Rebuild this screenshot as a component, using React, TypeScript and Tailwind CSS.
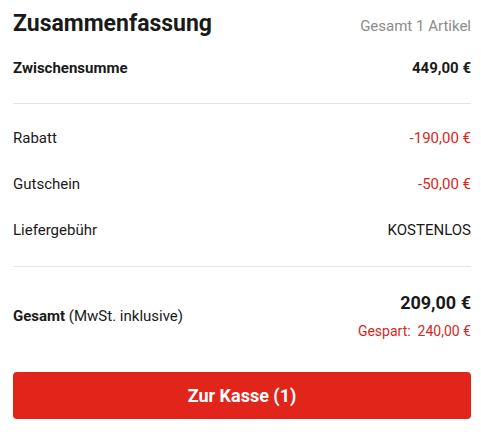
export default function App() {
  return (
    <div className="w-[481px] h-[437px] bg-white pl-[13px] pr-[10px] font-['Roboto',sans-serif] text-[#1a1a1a]">
      {/* Header */}
      <div className="flex items-baseline justify-between pt-[9px]">
        <h2 className="text-[23px] leading-[29px] font-bold">Zusammenfassung</h2>
        <span className="text-[15px] text-[#8c8c8c]">Gesamt 1 Artikel</span>
      </div>

      <div className="mt-[8px] flex h-[44px] items-center justify-between text-[15px] font-bold">
        <span>Zwischensumme</span>
        <span>449,00 €</span>
      </div>

      <div className="mt-[13px] h-px bg-[#e5e5e5]" />

      <div className="pt-[11px] pb-[13px] text-[15px]">
        <div className="flex h-[46px] items-center justify-between">
          <span>Rabatt</span>
          <span className="text-[#d8261e]">-190,00 €</span>
        </div>
        <div className="flex h-[46px] items-center justify-between">
          <span>Gutschein</span>
          <span className="text-[#d8261e]">-50,00 €</span>
        </div>
        <div className="flex h-[46px] items-center justify-between">
          <span>Liefergebühr</span>
          <span>KOSTENLOS</span>
        </div>
      </div>

      <div className="h-px bg-[#e5e5e5]" />

      {/* Total */}
      <div className="flex items-center justify-between pt-[24px]">
        <div className="text-[15px]">
          <span className="font-bold">Gesamt</span> (MwSt. inklusive)
        </div>
        <div className="flex flex-col items-end gap-[6px]">
          <span className="text-[18px] leading-[24px] font-bold">209,00 €</span>
          <span className="text-[14px] leading-[20px] text-[#d8261e]">Gespart:&nbsp; 240,00 €</span>
        </div>
      </div>

      <button className="mt-[31px] flex h-[47px] w-full items-center justify-center rounded-[4px] bg-[#e1251b] text-[18px] font-bold text-white">
        Zur Kasse (1)
      </button>
    </div>
  )
}
